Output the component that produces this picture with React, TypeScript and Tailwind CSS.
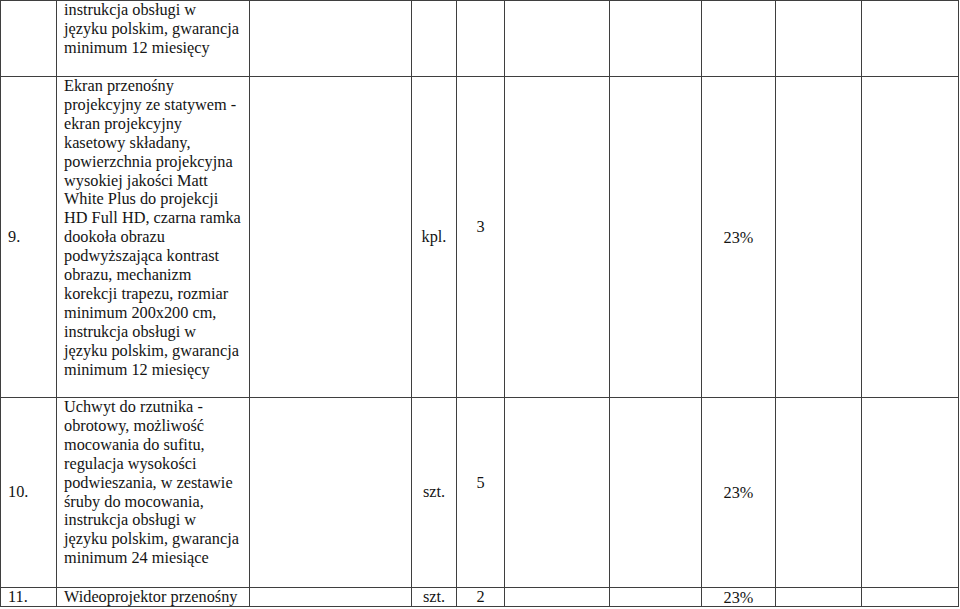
import React from 'react';

const rows = [
  {
    no: '',
    lines: ['instrukcja obsługi w', 'języku polskim, gwarancja', 'minimum 12 miesięcy'],
    unit: '',
    qty: '',
    vat: '',
    trailing: true,
  },
  {
    no: '9.',
    lines: [
      'Ekran przenośny',
      'projekcyjny ze statywem -',
      'ekran projekcyjny',
      'kasetowy składany,',
      'powierzchnia projekcyjna',
      'wysokiej jakości Matt',
      'White Plus do projekcji',
      'HD Full HD, czarna ramka',
      'dookoła obrazu',
      'podwyższająca kontrast',
      'obrazu, mechanizm',
      'korekcji trapezu, rozmiar',
      'minimum 200x200 cm,',
      'instrukcja obsługi w',
      'języku polskim, gwarancja',
      'minimum 12 miesięcy',
    ],
    unit: 'kpl.',
    qty: '3',
    vat: '23%',
    trailing: true,
  },
  {
    no: '10.',
    lines: [
      'Uchwyt do rzutnika -',
      'obrotowy, możliwość',
      'mocowania do sufitu,',
      'regulacja wysokości',
      'podwieszania, w zestawie',
      'śruby do mocowania,',
      'instrukcja obsługi w',
      'języku polskim, gwarancja',
      'minimum 24 miesiące',
    ],
    unit: 'szt.',
    qty: '5',
    vat: '23%',
    trailing: true,
  },
  {
    no: '11.',
    lines: ['Wideoprojektor przenośny'],
    unit: 'szt.',
    qty: '2',
    vat: '23%',
    trailing: false,
  },
];

const App = () => {
  return (
    <div className="w-[960px] h-[609px] bg-white overflow-hidden">
      <div
        className="grid w-[959px] gap-px bg-[#3f3f3f] p-px text-[16.3px] leading-[18.9px] text-[#141414] grid-cols-[55px_192px_161px_44px_47px_104px_91px_73px_85px_96px] grid-rows-[75px_320px_189px_18px]"
        style={{ fontFamily: '"Liberation Serif", "Times New Roman", serif' }}
      >
        {rows.map((row, idx) => (
          <React.Fragment key={idx}>
            {/* Lp. */}
            <div className="bg-white flex items-center pl-[7px] whitespace-nowrap">{row.no}</div>

            {/* Opis */}
            <div className="bg-white pl-[7px] whitespace-nowrap">
              {row.lines.map((line, i) => (
                <div key={i}>{line}</div>
              ))}
            </div>

            <div className="bg-white" />

            {/* J.m. */}
            <div className="bg-white flex items-center justify-center whitespace-nowrap">{row.unit}</div>

            {/* Ilość */}
            <div className="bg-white flex items-center justify-center">
              <div className={row.trailing ? 'pb-[19px]' : ''}>{row.qty}</div>
            </div>

            <div className="bg-white" />
            <div className="bg-white" />

            {/* VAT */}
            <div className="bg-white flex items-center justify-center pt-[2px]">{row.vat}</div>

            <div className="bg-white" />
            <div className="bg-white" />
          </React.Fragment>
        ))}
      </div>
    </div>
  );
};

export default App;
